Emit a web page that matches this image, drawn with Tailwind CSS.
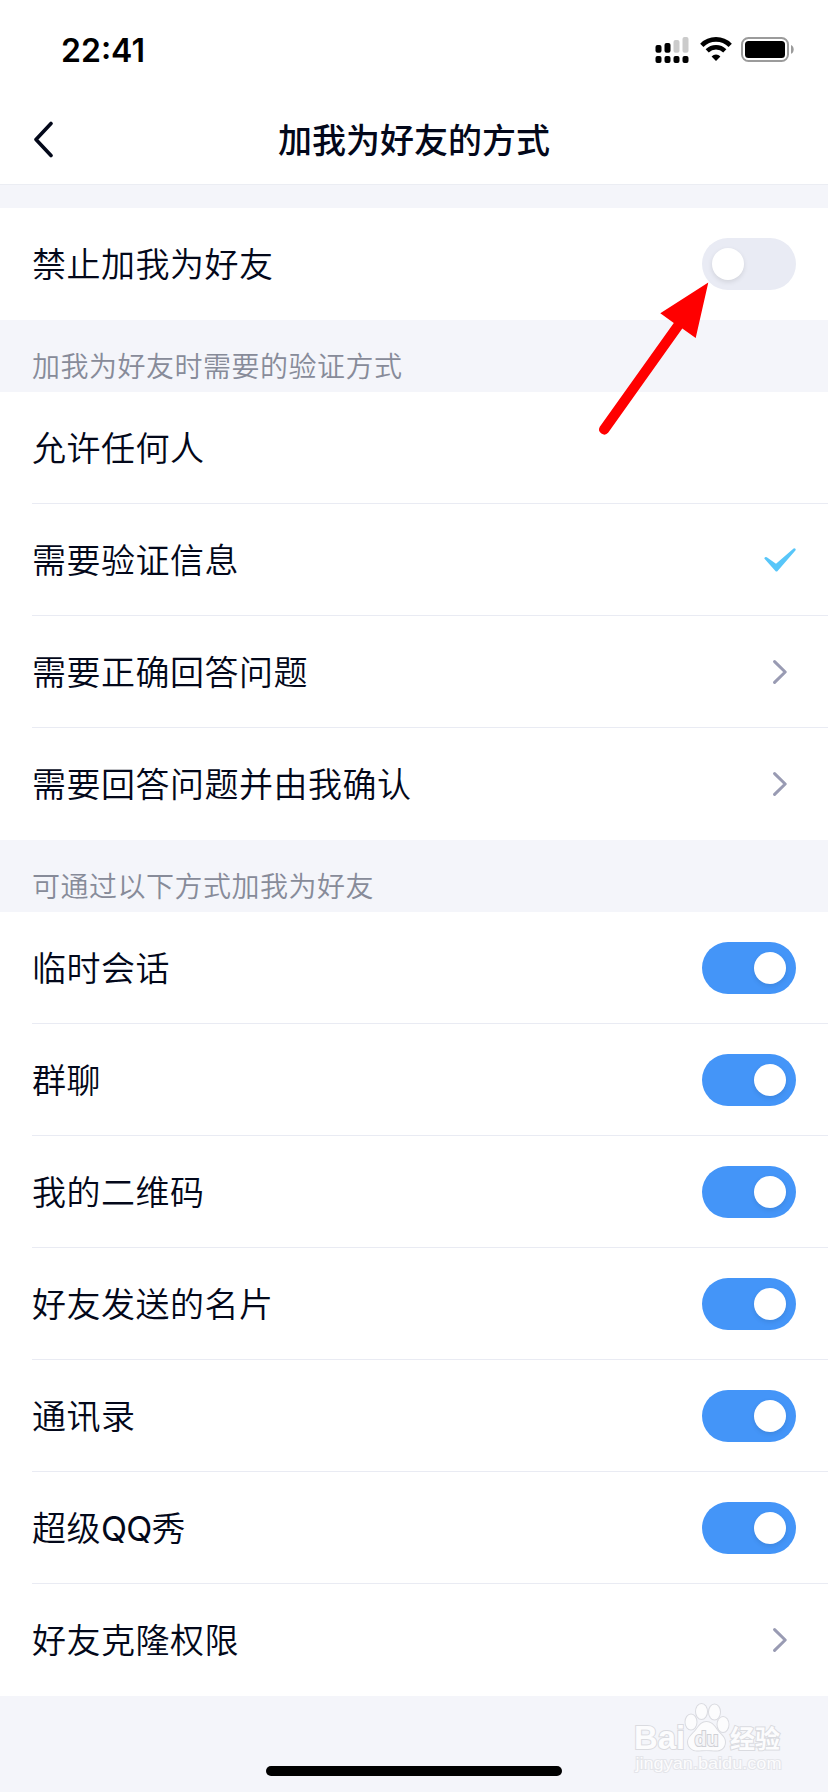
<!DOCTYPE html>
<html lang="zh-CN">

<head>
  <meta charset="UTF-8" />
  <meta name="viewport" content="width=device-width, initial-scale=1.0" />
  <title>加我为好友的方式</title>
  <script src="https://cdn.jsdelivr.net/npm/@tailwindcss/browser@4"></script>
</head>

<body class="relative flex h-[1792px] w-[828px] flex-col overflow-hidden bg-[#f4f5fa] font-['Inter','Noto_Sans_CJK_SC',sans-serif] text-[#03081a]">
  <!-- Shared icons -->
  <svg class="hidden">
    <symbol id="chevron" viewBox="0 0 14 24">
      <path d="M1.6 1.6 12.2 12 1.6 22.4" fill="none" stroke="#999bb3" stroke-width="3" stroke-linecap="round" stroke-linejoin="round" />
    </symbol>
  </svg>

  <header class="bg-white">
    <!-- Status bar -->
    <div class="flex h-22 items-start justify-between pt-[37px] pr-[34px] pl-[61px]">
      <span class="pt-px text-[32px] leading-[25px] font-semibold text-black">22:41</span>
      <div class="flex items-start">
        <svg class="mr-[11px] h-[27px] w-[34px]" viewBox="0 0 34 27">
          <g fill="#cbcbcb">
            <rect x="18.5" y="3" width="6" height="12.7" rx="2" />
            <rect x="27.5" y="0" width="6" height="15.7" rx="2" />
          </g>
          <rect x="0.5" y="8" width="6" height="7.7" rx="2" />
          <rect x="9.5" y="6" width="6" height="9.7" rx="2" />
          <rect x="0.5" y="19" width="6" height="7" rx="2" />
          <rect x="9.5" y="19" width="6" height="7" rx="2" />
          <rect x="18.5" y="19" width="6" height="7" rx="2" />
          <rect x="27.5" y="19" width="6" height="7" rx="2" />
        </svg>
        <svg class="mr-[9px] h-6 w-8" viewBox="0 0 32 24">
          <path d="M1.8 8.3a20 20 0 0 1 28.4 0" fill="none" stroke="#000" stroke-width="4.6" />
          <path d="M7.2 13.9a12.4 12.4 0 0 1 17.6 0" fill="none" stroke="#000" stroke-width="4.4" />
          <path d="M11.6 19.4a6.2 6.2 0 0 1 8.8 0L16 24z" />
        </svg>
        <svg class="h-[25px] w-[53px]" viewBox="0 0 53 25">
          <rect x="1" y="1" width="46" height="23" rx="6.5" fill="none" stroke="#9b9b9b" stroke-width="2" />
          <rect x="4" y="4" width="40" height="17" rx="3.5" />
          <path d="M50 8c3.6 1.400 3.600 7.400 0 8.800z" fill="#9b9b9b" />
        </svg>
      </div>
    </div>
    <!-- Title bar -->
    <div class="relative flex h-24 items-center justify-center pt-[9px]">
      <svg class="absolute top-[33px] left-[33px] h-[37px] w-5" viewBox="0 0 20 37">
        <path d="M18 2.500 3 18.500 18 34.500" fill="none" stroke="#03081a" stroke-width="3.600" stroke-linecap="round" stroke-linejoin="round" />
      </svg>
      <h1 class="text-[34px] leading-12 font-medium">加我为好友的方式</h1>
    </div>
  </header>

  <main class="border-t border-[#ebedf3] text-[34px] font-[350] tracking-[0.5px]">
    <div class="mt-[23px] flex h-28 items-center justify-between bg-white pr-8 pl-8">
      <span>禁止加我为好友</span>
      <div class="flex h-13 w-[94px] items-center rounded-full bg-[#e9ebf4] px-2.5">
        <div class="size-8 rounded-full bg-white shadow-[0_2px_5px_rgba(0,0,0,0.1)]"></div>
      </div>
    </div>

    <h2 class="flex h-18 items-end pb-[5px] pl-8 text-[28px] leading-10 text-[#878b99]">加我为好友时需要的验证方式</h2>
    <ul class="bg-white pl-8">
      <li class="flex h-28 items-center justify-between border-b border-[#e9ebf3] pr-8">
        <span class="pt-px">允许任何人</span>
      </li>
      <li class="flex h-28 items-center justify-between border-b border-[#e9ebf3] pr-8">
        <span class="pt-px">需要验证信息</span>
        <svg class="h-6 w-8" viewBox="0 0 32 24">
          <path d="M0.300 10.600 Q0.600 8.200 2.800 9.200 L12 15.800 L29.600 0.400 Q31.800 0 31.800 2 L13.600 23 Q12.500 24 11.400 23 Z" fill="#58c6f9" />
        </svg>
      </li>
      <li class="flex h-28 items-center justify-between border-b border-[#e9ebf3] pr-[41px]">
        <span class="pt-px">需要正确回答问题</span>
        <svg class="h-6 w-3.5"><use href="#chevron" /></svg>
      </li>
      <li class="flex h-28 items-center justify-between pr-[41px]">
        <span>需要回答问题并由我确认</span>
        <svg class="h-6 w-3.5"><use href="#chevron" /></svg>
      </li>
    </ul>

    <h2 class="flex h-18 items-end pb-[5px] pl-8 text-[28px] leading-10 text-[#878b99]">可通过以下方式加我为好友</h2>
    <ul class="bg-white pl-8">
      <li class="flex h-28 items-center justify-between border-b border-[#e9ebf3] pr-8">
        <span class="pt-px">临时会话</span>
        <div class="flex h-13 w-[94px] items-center justify-end rounded-full bg-[#4495f8] px-2.5">
          <div class="size-8 rounded-full bg-white shadow-[0_2px_5px_rgba(0,0,0,0.1)]"></div>
        </div>
      </li>
      <li class="flex h-28 items-center justify-between border-b border-[#e9ebf3] pr-8">
        <span class="pt-px">群聊</span>
        <div class="flex h-13 w-[94px] items-center justify-end rounded-full bg-[#4495f8] px-2.5">
          <div class="size-8 rounded-full bg-white shadow-[0_2px_5px_rgba(0,0,0,0.1)]"></div>
        </div>
      </li>
      <li class="flex h-28 items-center justify-between border-b border-[#e9ebf3] pr-8">
        <span class="pt-px">我的二维码</span>
        <div class="flex h-13 w-[94px] items-center justify-end rounded-full bg-[#4495f8] px-2.5">
          <div class="size-8 rounded-full bg-white shadow-[0_2px_5px_rgba(0,0,0,0.1)]"></div>
        </div>
      </li>
      <li class="flex h-28 items-center justify-between border-b border-[#e9ebf3] pr-8">
        <span class="pt-px">好友发送的名片</span>
        <div class="flex h-13 w-[94px] items-center justify-end rounded-full bg-[#4495f8] px-2.5">
          <div class="size-8 rounded-full bg-white shadow-[0_2px_5px_rgba(0,0,0,0.1)]"></div>
        </div>
      </li>
      <li class="flex h-28 items-center justify-between border-b border-[#e9ebf3] pr-8">
        <span class="pt-px">通讯录</span>
        <div class="flex h-13 w-[94px] items-center justify-end rounded-full bg-[#4495f8] px-2.5">
          <div class="size-8 rounded-full bg-white shadow-[0_2px_5px_rgba(0,0,0,0.1)]"></div>
        </div>
      </li>
      <li class="flex h-28 items-center justify-between border-b border-[#e9ebf3] pr-8">
        <span class="pt-px">超级<span class="font-normal tracking-[-0.8px]">QQ</span>秀</span>
        <div class="flex h-13 w-[94px] items-center justify-end rounded-full bg-[#4495f8] px-2.5">
          <div class="size-8 rounded-full bg-white shadow-[0_2px_5px_rgba(0,0,0,0.1)]"></div>
        </div>
      </li>
      <li class="flex h-28 items-center justify-between pr-[41px]">
        <span>好友克隆权限</span>
        <svg class="h-6 w-3.5"><use href="#chevron" /></svg>
      </li>
    </ul>
  </main>

  <!-- Home indicator -->
  <div class="mx-auto mt-auto mb-4 h-2.5 w-[296px] rounded-full bg-black"></div>

  <!-- Arrow pointing at the first switch -->
  <svg class="absolute top-[270px] left-[590px] h-[180px] w-[130px]" viewBox="590 270 130 180">
    <path d="M708.300 282.500 695.700 338 682.300 328.500 608.300 432.600A5.200 5.200 0 0 1 599.800 426.700L673.800 323 660.300 313.200z" fill="#f00" />
  </svg>

  <!-- Watermark -->
  <svg class="absolute top-[1700px] left-[630px] h-[78px] w-[160px]" viewBox="630 1700 160 78" fill="#fcfcfd" stroke="#dadbe0" stroke-width="2" paint-order="stroke">
    <text x="634" y="1749" font-family="Liberation Sans" font-weight="bold" font-size="33" textLength="51" lengthAdjust="spacingAndGlyphs">Bai</text>
    <ellipse cx="691" cy="1722" rx="5.500" ry="7.500" />
    <ellipse cx="701.500" cy="1711.500" rx="5.500" ry="7.500" />
    <ellipse cx="714.500" cy="1712" rx="5.500" ry="7.500" />
    <ellipse cx="723" cy="1724.500" rx="5.500" ry="7.500" />
    <path d="M706.500 1722c5 0 8 4 10.500 8 3 4.500 8 6.500 8 12 0 7-6 9-10 8.500-4-.500-13-.500-17 0-5 .500-10-3-10-8.500 0-5 5-8 8-12 3-4 5.500-8 10.500-8z" />
    <text x="694.500" y="1746" font-family="Liberation Sans" font-weight="bold" font-size="21" textLength="24" lengthAdjust="spacingAndGlyphs" fill="#f4f4f7" stroke="#cfd0d5">du</text>
    <text x="730" y="1747.500" font-family="Noto Sans CJK SC" font-weight="bold" font-size="25">经验</text>
    <text x="635.500" y="1768.500" font-family="Liberation Sans" font-size="17" textLength="146" lengthAdjust="spacingAndGlyphs" stroke="#e4e5ea">jingyan.baidu.com</text>
  </svg>
</body>

</html>
